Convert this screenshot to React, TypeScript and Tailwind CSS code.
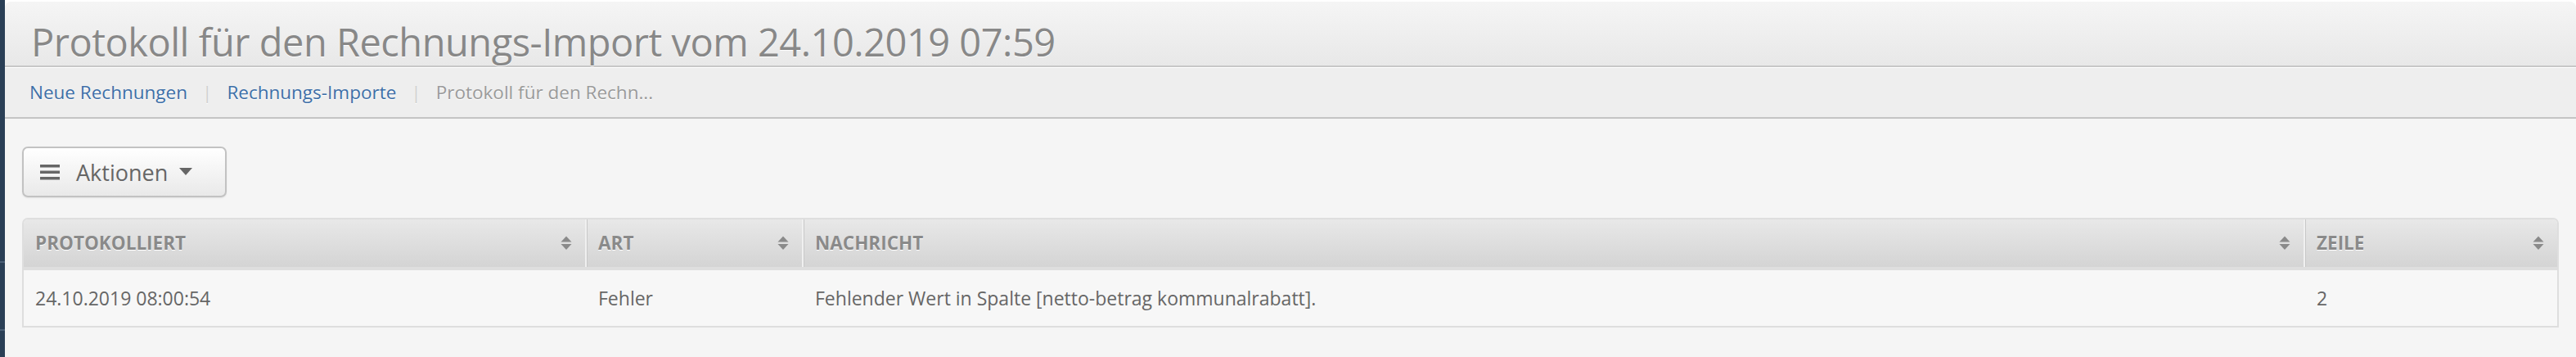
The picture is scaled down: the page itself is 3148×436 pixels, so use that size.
import React from 'react';

const columns = [
  { key: 'protokolliert', label: 'PROTOKOLLIERT' },
  { key: 'art', label: 'ART' },
  { key: 'nachricht', label: 'NACHRICHT' },
  { key: 'zeile', label: 'ZEILE' },
];

const rows = [
  {
    id: 1,
    protokolliert: '24.10.2019 08:00:54',
    art: 'Fehler',
    nachricht: 'Fehlender Wert in Spalte [netto-betrag kommunalrabatt].',
    zeile: '2',
  },
];

const SortIcon = () => (
  <svg width="14" height="20" viewBox="0 0 14 20" className="shrink-0">
    <path d="M7 1.5 L13.5 8.5 L0.5 8.5 Z" fill="#8a8a8a" />
    <path d="M0.5 11 L13.5 11 L7 18 Z" fill="#8a8a8a" />
  </svg>
);

const App: React.FC = () => {
  return (
    <div className="flex min-h-[436px] w-[3148px] bg-white font-['Open_Sans',sans-serif]">
      {/* Sidebar edge */}
      <div className="w-[6px] shrink-0 bg-[#2a3f56] flex flex-col">
        <div className="h-[319px]"></div>
        <div className="h-[2px] bg-[#4a5f76]"></div>
        <div className="h-[81px]"></div>
        <div className="h-[2px] bg-[#4a5f76]"></div>
      </div>

      <div className="flex-1 mt-[2px] rounded-t-[8px] overflow-hidden bg-[#f5f5f5] flex flex-col">
        {/* Title */}
        <div className="h-[80px] bg-gradient-to-b from-[#f5f5f5] to-[#e8e8e8] border-b-2 border-[#c7c7c7] flex items-start pt-[26px] pl-[32px]">
          <h1 className="text-[47px] leading-none text-[#888888] tracking-[-0.5px] [text-shadow:0_1px_0_#fff]">
            Protokoll für den Rechnungs-Import vom 24.10.2019 07:59
          </h1>
        </div>

        {/* Breadcrumb */}
        <div className="h-[63px] border-t border-white bg-[#eeeeee] border-b-2 border-b-[#c4c4c4] flex items-center pl-[30px] text-[22.5px] [text-shadow:0_1px_0_#fff]">
          <a className="text-[#3d6fa8]">Neue Rechnungen</a>
          <span className="mx-[18px] text-[#cfcfcf]">|</span>
          <a className="text-[#3d6fa8]">Rechnungs-Importe</a>
          <span className="mx-[18px] text-[#cfcfcf]">|</span>
          <span className="text-[#9a9a9a]">Protokoll für den Rechn...</span>
        </div>

        <div className="px-[21px] pt-[34px] pb-[30px]">
          {/* Actions */}
          <button className="h-[62px] w-[250px] rounded-[7px] border-2 border-[#c2c2c2] bg-gradient-to-b from-white to-[#e9e9e9] flex items-center pl-[20px] gap-[20px] text-[#666666] shadow-[0_1px_2px_rgba(0,0,0,0.08)]">
            <svg width="24" height="20" viewBox="0 0 24 20">
              <rect x="0" y="1" width="24" height="3.5" fill="#666" />
              <rect x="0" y="8.5" width="24" height="3.5" fill="#666" />
              <rect x="0" y="16" width="24" height="3.5" fill="#666" />
            </svg>
            <span className="text-[27px] leading-none flex items-center gap-[14px]">
              Aktionen
              <svg width="16" height="10" viewBox="0 0 16 10">
                <path d="M0 0 L16 0 L8 9 Z" fill="#666" />
              </svg>
            </span>
          </button>

          {/* Table */}
          <div className="mt-[25px] rounded-t-[7px] border-2 border-[#dedede] overflow-hidden">
            <div className="grid grid-cols-[688px_265px_1fr_308px] h-[62px] bg-gradient-to-b from-[#e8e8e8] to-[#d4d4d4] border-b-4 border-[#dedede]">
              {columns.map((c, i) => (
                <div
                  key={c.key}
                  className={`flex items-center justify-between pl-[14px] pr-[16px] ${
                    i < columns.length - 1 ? 'border-r-2 border-r-[#f0f0f0] shadow-[1px_0_0_#c8c8c8]' : ''
                  }`}
                >
                  <span className="text-[22.5px] font-bold text-[#8a8a8a] [text-shadow:0_1px_0_#fff]">{c.label}</span>
                  <SortIcon />
                </div>
              ))}
            </div>
            {rows.map((r) => (
              <div key={r.id} className="grid grid-cols-[688px_265px_1fr_308px] h-[68px] bg-[#f7f7f7] text-[23px] text-[#666666]">
                <div className="flex items-center pl-[14px]">{r.protokolliert}</div>
                <div className="flex items-center pl-[14px]">{r.art}</div>
                <div className="flex items-center pl-[14px]">{r.nachricht}</div>
                <div className="flex items-center pl-[14px]">{r.zeile}</div>
              </div>
            ))}
          </div>
        </div>
      </div>
    </div>
  );
};

export default App;
